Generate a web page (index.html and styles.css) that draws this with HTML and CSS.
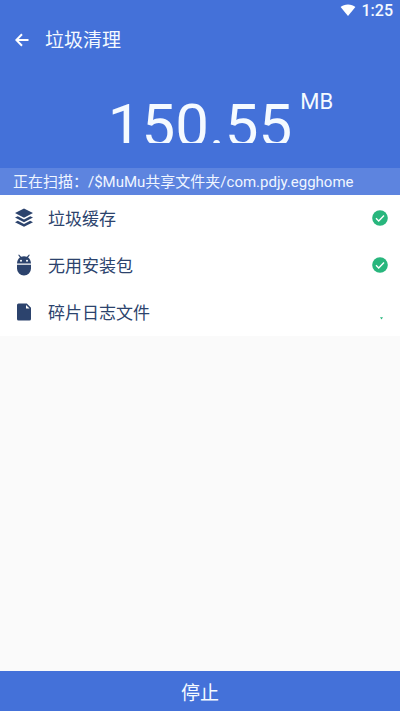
FILE: index.html
```html
<!DOCTYPE html>
<html lang="zh-CN">
<head>
<meta charset="utf-8">
<meta name="viewport" content="width=device-width, initial-scale=1">
<title>垃圾清理</title>
<link rel="stylesheet" href="styles.css">
</head>
<body>
<div class="status">
  <svg class="wifi" viewBox="0 0 16 12" aria-hidden="true"><path d="M8 12 0.6 3C2.400 1.400 5 .4 8 .4s5.600 1 7.400 2.600z"/></svg>
  <span>1:25</span>
</div>
<header class="toolbar">
  <button class="back" type="button" aria-label="返回">
    <svg viewBox="0 0 14 14" aria-hidden="true"><path d="M13.500 7H1.500M7 1.300 1.300 7 7 12.700"/></svg>
  </button>
  <h1>垃圾清理</h1>
</header>
<section class="total">
  <span class="amount">150.55</span>
  <span class="unit">MB</span>
</section>
<p class="path">正在扫描：/$MuMu共享文件夹/com.pdjy.egghome</p>
<main>
  <ul class="list">
    <li class="row">
      <svg class="icon" viewBox="0 0 20 22" aria-hidden="true"><path d="M10 1.500 19 6.100 10 10.700 1 6.100zM1 10.600 3.800 9.200l6.200 3.200 6.200-3.200L19 10.600l-9 4.600zM1 15.200 3.800 13.800l6.200 3.200 6.200-3.200L19 15.200l-9 4.600z"/></svg>
      <span class="name">垃圾缓存</span>
      <svg class="done" viewBox="0 0 16 16" role="img" aria-label="完成"><circle cx="8" cy="8" r="7.800"/><path d="m4 8.300 2.700 2.600L12 5.500"/></svg>
    </li>
    <li class="row">
      <svg class="icon" viewBox="0 0 20 22" aria-hidden="true"><path d="M3 9.600C3 6.800 4.200 4.700 5.900 3.500L4.200 1.100 5 .5l2.100 2.300a7.500 7.500 0 0 1 5.800 0L15 .5l.8.600-1.700 2.400c1.700 1.200 2.900 3.300 2.900 6.100zM3 10.800h14V14.500a7 7 0 0 1-14 0z"/><circle class="hole" cx="7" cy="6.700" r="1"/><circle class="hole" cx="13" cy="6.700" r="1"/></svg>
      <span class="name">无用安装包</span>
      <svg class="done" viewBox="0 0 16 16" role="img" aria-label="完成"><circle cx="8" cy="8" r="7.800"/><path d="m4 8.300 2.700 2.600L12 5.500"/></svg>
    </li>
    <li class="row">
      <svg class="icon" viewBox="0 0 20 22" aria-hidden="true"><path d="M4.500 2.500h8.300L17 6.700v11.300a1.500 1.500 0 0 1-1.500 1.500h-11A1.500 1.500 0 0 1 3 18V4a1.500 1.500 0 0 1 1.500-1.500z"/><path class="hole" d="M12 3.900v3.600h3.600z"/></svg>
      <span class="name">碎片日志文件</span>
      <svg class="busy" viewBox="0 0 16 16" role="img" aria-label="扫描中"><path d="M8 13.200h3l-1.500 2.200z"/></svg>
    </li>
  </ul>
</main>
<button class="stop" type="button">停止</button>
</body>
</html>
```

FILE: styles.css
```css
* {
  box-sizing: border-box;
}

body {
  margin: 0;
  min-height: 100vh;
  display: flex;
  flex-direction: column;
  background: #fafafa;
  color: #2c436d;
  font-family: Roboto, "Noto Sans CJK SC", sans-serif;
}

button {
  border: 0;
  padding: 0;
  color: inherit;
  font: inherit;
}

.status,
.toolbar,
.total,
.stop {
  background: #4471d9;
  color: #f5faff;
}

.status {
  display: flex;
  align-items: center;
  justify-content: flex-end;
  gap: 6px;
  height: 20px;
  padding-right: 7px;
  font-size: 16px;
  font-weight: 500;
}

.wifi {
  width: 16px;
  height: 12px;
  fill: #fff;
}

.toolbar {
  display: flex;
  align-items: center;
  gap: 16px;
  height: 40px;
  padding-left: 15px;
}

.back {
  display: flex;
  background: none;
}

.back svg {
  width: 14px;
  height: 14px;
  fill: none;
  stroke: #fff;
  stroke-width: 2;
}

h1 {
  margin: 0;
  padding-top: 2px;
  font-size: 19px;
  font-weight: 400;
  line-height: 28px;
}

.total {
  display: grid;
  grid-template-columns: 1fr auto 1fr;
  align-items: start;
  column-gap: 8px;
  height: 108px;
  padding-top: 28px;
}

.amount {
  grid-column: 2;
  height: 55px;
  padding-top: 8px;
  overflow: hidden;
  font-size: 60px;
  line-height: 60px;
}

.unit {
  font-size: 22px;
  line-height: 28px;
}

.path {
  margin: 0;
  padding: 2px 0 0 13px;
  background: #5d84df;
  color: #f0f6ff;
  font-size: 15px;
  line-height: 25px;
  white-space: nowrap;
  overflow: hidden;
}

main {
  flex: 1;
}

.list {
  margin: 0;
  padding: 0;
  list-style: none;
  background: #fff;
}

.row {
  display: flex;
  align-items: center;
  height: 47px;
  padding: 0 12px 2px 14px;
}

.icon {
  width: 20px;
  height: 22px;
  fill: #2c436d;
}

.hole {
  fill: #fff;
}

.name {
  flex: 1;
  margin-left: 14px;
  font-size: 17px;
}

.done,
.busy {
  width: 16px;
  height: 16px;
  fill: #28b67d;
}

.done path {
  fill: none;
  stroke: #fff;
  stroke-width: 1.4;
}

.stop {
  height: 40px;
  font-size: 19px;
}
```
